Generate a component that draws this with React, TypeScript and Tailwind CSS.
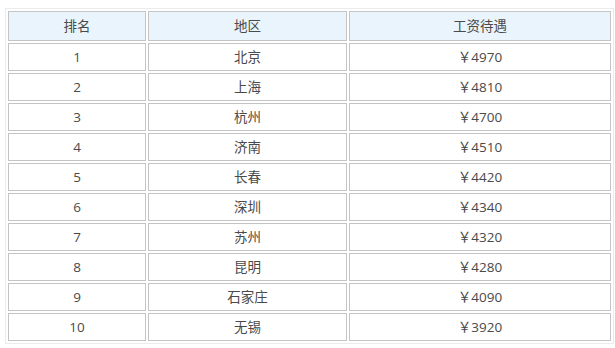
import React from "react";

const rows: [string, string, string][] = [
  ["1", "北京", "￥4970"],
  ["2", "上海", "￥4810"],
  ["3", "杭州", "￥4700"],
  ["4", "济南", "￥4510"],
  ["5", "长春", "￥4420"],
  ["6", "深圳", "￥4340"],
  ["7", "苏州", "￥4320"],
  ["8", "昆明", "￥4280"],
  ["9", "石家庄", "￥4090"],
  ["10", "无锡", "￥3920"],
];

export default function App() {
  return (
    <div
      className="w-[615px] h-[348px] bg-white pl-[5px] pt-[8px]"
      style={{ fontFamily: '"Open Sans", "Noto Sans CJK SC", sans-serif' }}
    >
      <table className="table-fixed w-[609px] border-separate border-spacing-[2px] border border-[#ebebeb] text-[13.5px] text-[#4a4a4a]">
        <thead>
          <tr>
            <th className="w-[138px] h-[30px] p-0 font-normal bg-[#e9f4fc] border border-[#c4c4c4]">排名</th>
            <th className="w-[199px] h-[30px] p-0 font-normal bg-[#e9f4fc] border border-[#c4c4c4]">地区</th>
            <th className="w-[262px] h-[30px] p-0 font-normal bg-[#e9f4fc] border border-[#c4c4c4]">工资待遇</th>
          </tr>
        </thead>
        <tbody>
          {rows.map((r) => (
            <tr key={r[0]}>
              <td className="h-[28px] p-0 text-center border border-[#c4c4c4]">{r[0]}</td>
              <td className="h-[28px] p-0 text-center border border-[#c4c4c4]">{r[1]}</td>
              <td className="h-[28px] p-0 text-center border border-[#c4c4c4]">{r[2]}</td>
            </tr>
          ))}
        </tbody>
      </table>
    </div>
  );
}
